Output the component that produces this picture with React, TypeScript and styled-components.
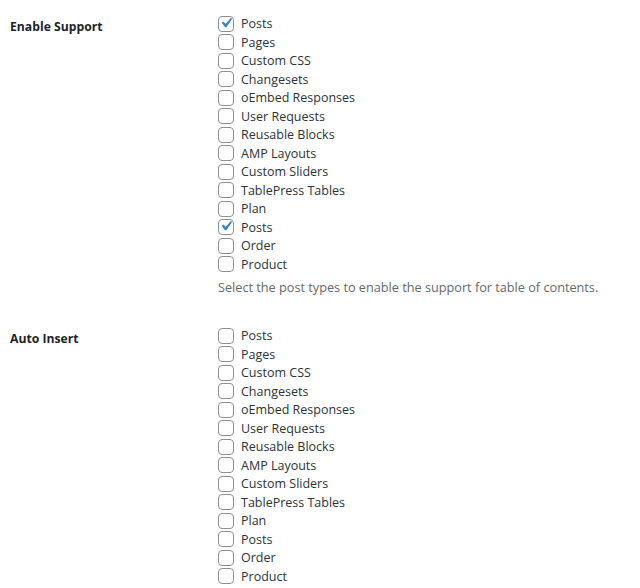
import React from "react";
import styled, { createGlobalStyle } from "styled-components";

const Global = createGlobalStyle`
  html, body { margin: 0; padding: 0; background: #ffffff; }
  body { font-family: "Open Sans", "Noto Sans", sans-serif; color: #2c3338; }
`;

const Form = styled.div`
  display: flex;
  flex-direction: column;
`;

const Row = styled.div`
  display: grid;
  grid-template-columns: 218px 1fr;
`;

const Th = styled.div`
  padding: 18px 10px 0 10px;
  font-size: 12.2px;
  font-weight: 700;
  line-height: 18px;
  color: #1d2327;
`;

const Td = styled.div`
  padding: 14.5px 10px 15.5px 0;
`;

const List = styled.div`
  display: flex;
  flex-direction: column;
`;

const Item = styled.label`
  display: flex;
  align-items: center;
  height: 18.5px;
  font-size: 12.5px;
  color: #2c3338;
`;

const Box = styled.span`
  box-sizing: border-box;
  width: 16px;
  height: 16px;
  border: 1px solid #8c8f94;
  border-radius: 4px;
  background: #fff;
  margin-right: 7px;
  display: inline-flex;
  align-items: center;
  justify-content: center;
  flex: none;
  overflow: visible;
  & > svg { flex: none; margin: -2px 0 0 -1px; }
`;

const Desc = styled.p`
  margin: 4px 0 0 0;
  font-size: 12.7px;
  line-height: 19px;
  color: #646970;
`;

const types = [
  "Posts",
  "Pages",
  "Custom CSS",
  "Changesets",
  "oEmbed Responses",
  "User Requests",
  "Reusable Blocks",
  "AMP Layouts",
  "Custom Sliders",
  "TablePress Tables",
  "Plan",
  "Posts",
  "Order",
  "Product",
];

const Check = () => (
  <svg width="20" height="20" viewBox="0 0 20 20">
    <path d="M14.83 4.89l1.34.94-5.81 8.38H9.02L5.78 9.67l1.34-1.25 2.57 2.4z" fill="#3582c4" />
  </svg>
);

const Checks = ({ checked }: { checked: number[] }) => (
  <List>
    {types.map((t, i) => (
      <Item key={i}>
        <Box>{checked.includes(i) && <Check />}</Box>
        {t}
      </Item>
    ))}
  </List>
);

export default function App() {
  return (
    <>
      <Global />
      <Form>
        <Row>
          <Th>Enable Support</Th>
          <Td>
            <Checks checked={[0, 11]} />
            <Desc>Select the post types to enable the support for table of contents.</Desc>
          </Td>
        </Row>
        <Row>
          <Th>Auto Insert</Th>
          <Td>
            <Checks checked={[]} />
          </Td>
        </Row>
      </Form>
    </>
  );
}
